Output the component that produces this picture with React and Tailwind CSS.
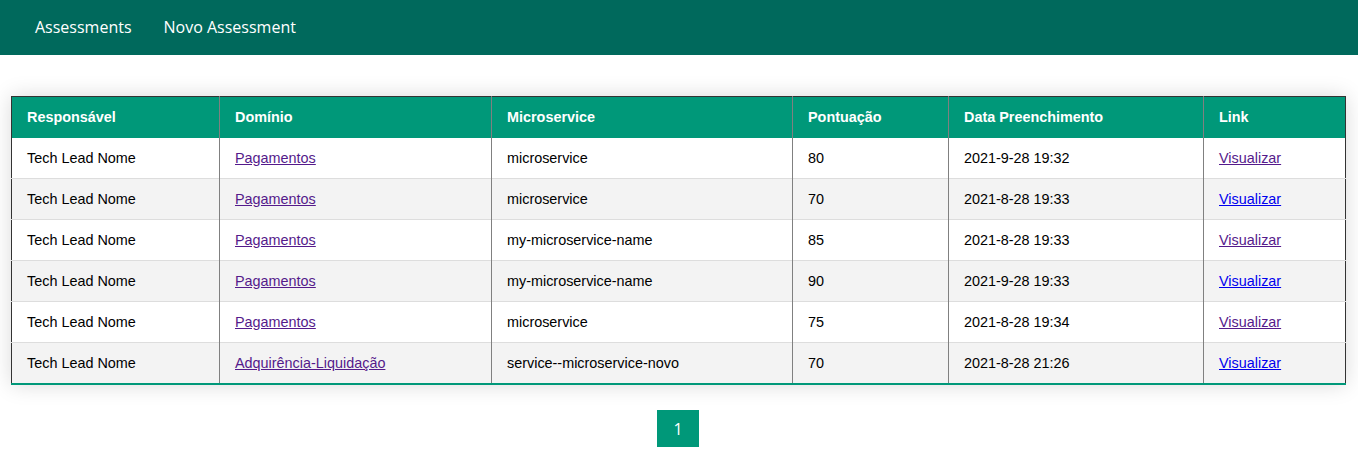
import React from "react";

const rows = [
  ["Tech Lead Nome", "Pagamentos", "microservice", "80", "2021-9-28 19:32"],
  ["Tech Lead Nome", "Pagamentos", "microservice", "70", "2021-8-28 19:33"],
  ["Tech Lead Nome", "Pagamentos", "my-microservice-name", "85", "2021-8-28 19:33"],
  ["Tech Lead Nome", "Pagamentos", "my-microservice-name", "90", "2021-9-28 19:33"],
  ["Tech Lead Nome", "Pagamentos", "microservice", "75", "2021-8-28 19:34"],
  ["Tech Lead Nome", "Adquirência-Liquidação", "service--microservice-novo", "70", "2021-8-28 21:26"],
];

export default function App() {
  return (
    <div className="min-h-[467px] bg-white" style={{ fontFamily: '"Liberation Sans", Arial, sans-serif' }}>
      <nav className="h-[55px] bg-[#00695c] flex items-center pl-[35px] pb-[2px] gap-[32px] text-white text-[16px]" style={{ fontFamily: '"Open Sans", sans-serif' }}>
        <a className="text-white">Assessments</a>
        <a className="text-white">Novo Assessment</a>
      </nav>
      <div className="pl-[11px] pt-[41px]">
        <table className="w-[1334px] table-fixed border-collapse border border-[#333] shadow-[0_0_20px_rgba(0,0,0,0.15)] text-[14.4px] leading-[16px] text-black">
          <thead>
            <tr className="bg-[#009879] text-white text-left leading-[17px]">
              <th className="w-[208px] py-[12px] px-[15px] font-bold border-r border-[#808080]">Responsável</th>
              <th className="w-[272px] py-[12px] px-[15px] font-bold border-r border-[#808080]">Domínio</th>
              <th className="w-[301px] py-[12px] px-[15px] font-bold border-r border-[#808080]">Microservice</th>
              <th className="w-[156px] py-[12px] px-[15px] font-bold border-r border-[#808080]">Pontuação</th>
              <th className="w-[255px] py-[12px] px-[15px] font-bold border-r border-[#808080]">Data Preenchimento</th>
              <th className="w-[142px] py-[12px] px-[15px] font-bold">Link</th>
            </tr>
          </thead>
          <tbody>
            {rows.map((r, i) => {
              const last = i === rows.length - 1;
              const even = i % 2 === 1;
              return (
                <tr
                  key={i}
                  className={
                    (even ? "bg-[#f3f3f3] " : "bg-white ") +
                    (last ? "border-b-2 border-[#009879]" : "border-b border-[#dddddd]")
                  }
                >
                  <td className="py-[12px] px-[15px] border-r border-[#808080]">{r[0]}</td>
                  <td className="py-[12px] px-[15px] border-r border-[#808080]">
                    <a className="underline text-[#551a8b]">{r[1]}</a>
                  </td>
                  <td className="py-[12px] px-[15px] border-r border-[#808080]">{r[2]}</td>
                  <td className="py-[12px] px-[15px] border-r border-[#808080]">{r[3]}</td>
                  <td className="py-[12px] px-[15px] border-r border-[#808080]">{r[4]}</td>
                  <td className="py-[12px] px-[15px]">
                    <a className={"underline " + (even ? "text-[#0000ee]" : "text-[#551a8b]")}>Visualizar</a>
                  </td>
                </tr>
              );
            })}
          </tbody>
        </table>
      </div>
      <div className="flex justify-center pt-[25px] pr-[2px]">
        <button className="w-[42px] h-[37px] bg-[#009879] text-white text-[16px] flex items-center justify-center" style={{ fontFamily: '"Open Sans", sans-serif' }}>
          1
        </button>
      </div>
    </div>
  );
}
